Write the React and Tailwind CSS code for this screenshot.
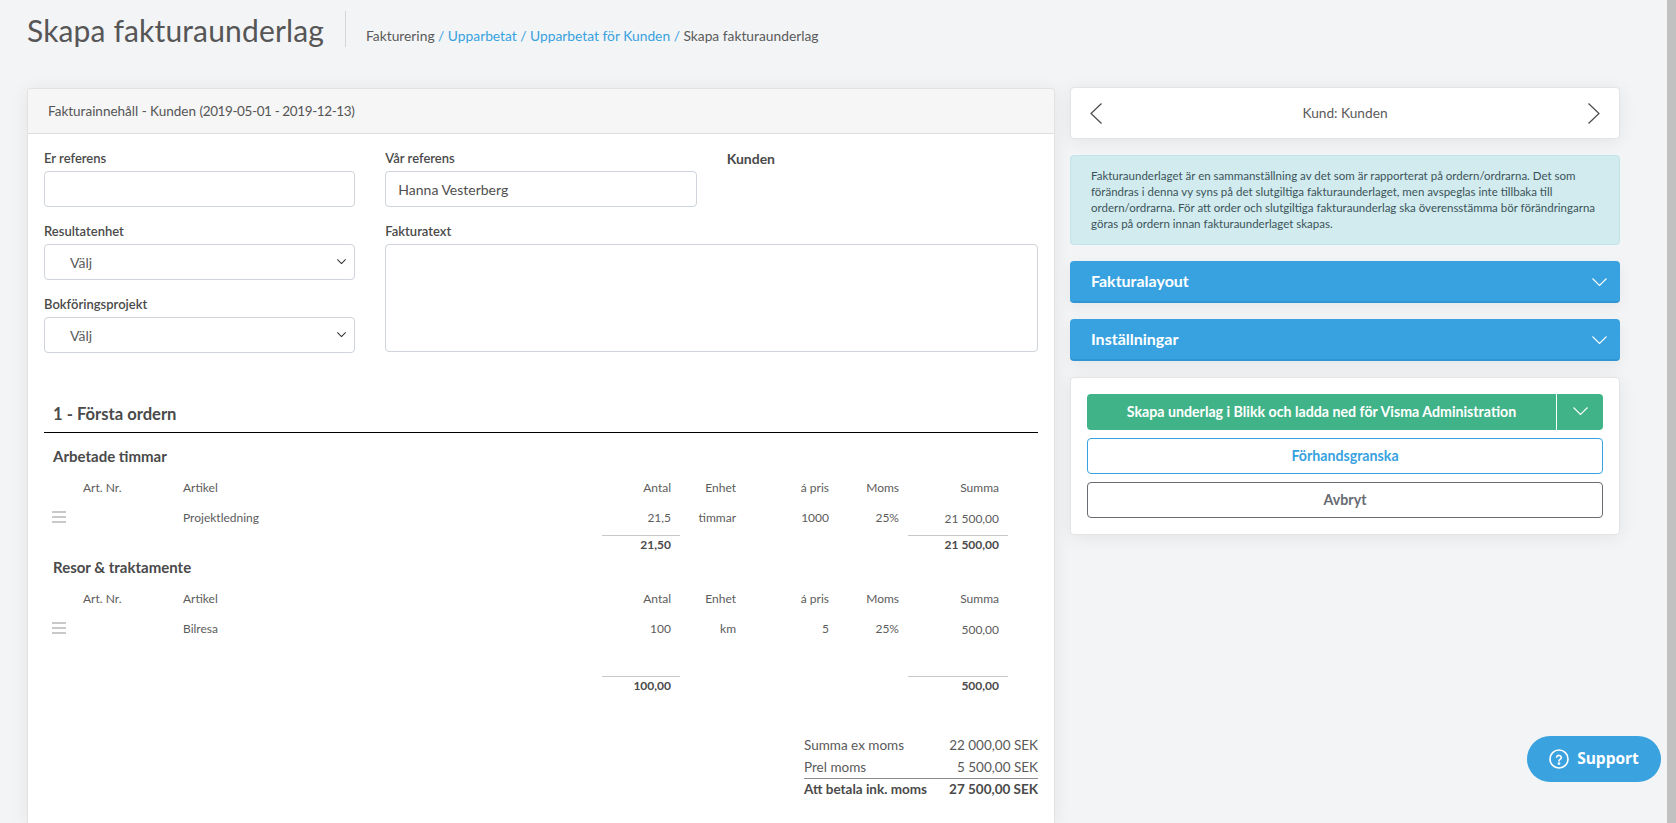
import { useState } from "react";

const cols = "grid grid-cols-[31px_100px_419px_78px_65px_93px_70px_100px] items-center";

function Chevron({ className, strokeWidth = 1.1 }) {
  return (
    <svg viewBox="0 0 15 8" fill="none" stroke="currentColor" strokeWidth={strokeWidth} className={className}>
      <polyline points="0.5,0.5 7.5,7.5 14.5,0.5" />
    </svg>
  );
}

function Burger() {
  return (
    <div className="flex flex-col gap-[3px] w-[14px]">
      <div className="h-[2px] bg-[#c9c9c9]" />
      <div className="h-[2px] bg-[#c9c9c9]" />
      <div className="h-[2px] bg-[#c9c9c9]" />
    </div>
  );
}

function Field({ label, children, className }) {
  return (
    <div className={className}>
      <label className="block h-[27px] pt-[5px] text-[13px] leading-[18px] font-semibold text-[#4a4a4a]">{label}</label>
      {children}
    </div>
  );
}

function Select({ label }) {
  const [value, setValue] = useState("");
  return (
    <Field label={label} className="mb-[10px]">
      <div className="relative">
        <select
          value={value}
          onChange={(e) => setValue(e.target.value)}
          className="appearance-none w-full h-[36px] pl-[25px] bg-white border border-[#ced4da] rounded-[4px] text-[14px] text-[#5a5a5a] outline-none"
        >
          <option value="">Välj</option>
        </select>
        <Chevron strokeWidth={1.8} className="absolute right-[9px] top-[15px] w-[9px] h-[5px] text-[#333]" />
      </div>
    </Field>
  );
}

function ItemTable({ title, art, antal, enhet, pris, summa, totalAntal, totalSumma, tall, top }) {
  return (
    <div>
      <h4 className={`h-[24px] pl-[9px] text-[15px] leading-[24px] font-bold text-[#4a4a4a] ${top}`}>{title}</h4>
      <div className={`${cols} h-[30px] mt-[5px] ml-[8px] text-[12px] text-[#5c5c5c]`}>
        <div />
        <div>Art. Nr.</div>
        <div>Artikel</div>
        <div className="text-right pr-[9px]">Antal</div>
        <div className="text-right pr-[9px]">Enhet</div>
        <div className="text-right pr-[9px]">á pris</div>
        <div className="text-right pr-[9px]">Moms</div>
        <div className="text-right pr-[9px]">Summa</div>
      </div>
      <div className={`${cols} items-start ml-[8px] text-[12px] text-[#5c5c5c] ${tall ? "h-[62px]" : "h-[32px]"}`}>
        <div className="pt-[8px]"><Burger /></div>
        <div />
        <div className="leading-[30px]">{art}</div>
        <div className="leading-[30px] text-right pr-[9px]">{antal}</div>
        <div className="leading-[30px] text-right pr-[9px]">{enhet}</div>
        <div className="leading-[30px] text-right pr-[9px]">{pris}</div>
        <div className="leading-[30px] text-right pr-[9px]">25%</div>
        <div className="leading-[32px] text-right pr-[9px]">{summa}</div>
      </div>
      <div className={`${cols} ml-[8px] text-[12px] font-bold text-[#4a4a4a]`}>
        <div className="col-start-4 h-[19px] leading-[17px] border-t border-[#c8c8c8] text-right pr-[9px]">{totalAntal}</div>
        <div className="col-start-8 h-[19px] leading-[17px] border-t border-[#c8c8c8] text-right pr-[9px]">{totalSumma}</div>
      </div>
    </div>
  );
}

function AccordionBar({ title }) {
  return (
    <div className="h-[42px] flex items-center justify-between pl-[21px] pr-[13px] bg-[#37a2df] border-b-2 border-[#2f95d3] rounded-[4px] text-white shadow-[0_4px_14px_rgba(0,0,0,0.06)]">
      <span className="text-[16px] font-bold">{title}</span>
      <Chevron className="w-[15px] h-[8px] mt-[2px]" />
    </div>
  );
}

export default function App() {
  return (
    <div className="relative h-[823px] overflow-hidden flex bg-[#f3f4f6] font-['Lato',sans-serif] text-[#4a4a4a]">
      <div className="flex-1 min-w-0 pl-[27px]">
        <div className="h-[88px] flex items-start">
          <h1 className="mt-[11px] text-[30px] tracking-[0.15px] leading-[38px] text-[#565656]">Skapa fakturaunderlag</h1>
          <div className="w-px h-[36px] mt-[11px] ml-[21px] bg-[#d5d6d8]" />
          <div className="mt-[26px] ml-[20px] text-[13.8px] leading-[20px] text-[#5a5a5a]">
            Fakturering <span className="text-[#37a2df]">/ Upparbetat / Upparbetat för Kunden /</span> Skapa fakturaunderlag
          </div>
        </div>

        <div className="flex gap-[15px] items-start">
          <div className="w-[1028px] h-[735px] bg-white border border-[#e2e2e2] border-b-0 rounded-t-[4px] shadow-[0_2px_18px_rgba(0,0,0,0.07)]">
            <div className="h-[45px] flex items-center pl-[20px] bg-[#f6f6f6] border-b border-[#dedede] rounded-t-[4px] text-[13.5px] text-[#555]">
              <span>
                Fakturainnehåll - Kunden <span className="tracking-[-0.38px]">(2019-05-01 - 2019-12-13)</span>
              </span>
            </div>

            <div className="grid grid-cols-3 gap-x-[30px] pl-[16px] pr-[16px] pt-[10px]">
              <Field label="Er referens">
                <input readOnly className="w-full h-[36px] bg-white border border-[#ced4da] rounded-[4px] outline-none" />
              </Field>
              <Field label="Vår referens">
                <input
                  readOnly
                  value="Hanna Vesterberg"
                  className="w-full h-[36px] pl-[12px] bg-white border border-[#ced4da] rounded-[4px] text-[14px] text-[#4f4f4f] outline-none"
                />
              </Field>
              <div className="pt-[6px] text-[14px] leading-[18px] font-bold text-[#4a4a4a]">Kunden</div>

              <div className="mt-[10px]">
                <Select label="Resultatenhet" />
                <Select label="Bokföringsprojekt" />
              </div>
              <Field label="Fakturatext" className="col-span-2 mt-[10px]">
                <textarea readOnly className="block w-full h-[108px] bg-white border border-[#ced4da] rounded-[4px] outline-none resize-none" />
              </Field>
            </div>

            <div className="mx-[16px] mt-[31px] h-[39px] pl-[9px] border-b border-black text-[16.6px] leading-[26px] font-bold text-[#4a4a4a]">
              <span className="block pt-[7px]">1 - Första ordern</span>
            </div>

            <div className="ml-[16px]">
              <ItemTable
                title="Arbetade timmar"
                art="Projektledning"
                antal="21,5"
                enhet="timmar"
                pris="1000"
                summa="21 500,00"
                totalAntal="21,50"
                totalSumma="21 500,00"
                top="mt-[11px]"
              />
              <ItemTable
                title="Resor & traktamente"
                art="Bilresa"
                antal="100"
                enhet="km"
                pris="5"
                summa="500,00"
                totalAntal="100,00"
                totalSumma="500,00"
                tall
                top="mt-[1px]"
              />
            </div>

            <div className="ml-auto w-[234px] mr-[16px] mt-[39px] text-[13.5px] text-[#5a5a5a]">
              <div className="h-[22px] flex items-center justify-between">
                <span>Summa ex moms</span>
                <span>22 000,00 SEK</span>
              </div>
              <div className="h-[22px] flex items-center justify-between">
                <span>Prel moms</span>
                <span>5 500,00 SEK</span>
              </div>
              <div className="h-[22px] flex items-center justify-between border-t border-[#8c8c8c] font-bold text-[#4a4a4a]">
                <span>Att betala ink. moms</span>
                <span>27 500,00 SEK</span>
              </div>
            </div>
          </div>

          <div className="w-[550px] flex flex-col gap-[16px] -mt-[1px]">
            <div className="h-[52px] flex items-center justify-between px-[19px] bg-white border border-[#e4e4e4] rounded-[4px] shadow-[0_2px_18px_rgba(0,0,0,0.07)]">
              <svg viewBox="0 0 12 21" fill="none" stroke="#4a4a4a" strokeWidth="1.2" className="w-[12px] h-[21px]">
                <polyline points="11.5,0.5 1,10.5 11.5,20.5" />
              </svg>
              <span className="text-[13.7px] text-[#5a5a5a]">Kund: Kunden</span>
              <svg viewBox="0 0 12 21" fill="none" stroke="#4a4a4a" strokeWidth="1.2" className="w-[12px] h-[21px]">
                <polyline points="0.5,0.5 11,10.5 0.5,20.5" />
              </svg>
            </div>

            <div className="h-[90px] pl-[20px] pr-[17px] pt-[12px] bg-[#d1ebef] border border-[#bfe5eb] rounded-[4px] text-[11.5px] leading-[16px] text-[#3c5459]">
              Fakturaunderlaget är en sammanställning av det som är rapporterat på ordern/ordrarna. Det som förändras i denna vy syns på det slutgiltiga fakturaunderlaget, men avspeglas inte tillbaka till ordern/ordrarna. För att order och slutgiltiga fakturaunderlag ska överensstämma bör förändringarna göras på ordern innan fakturaunderlaget skapas.
            </div>

            <AccordionBar title="Fakturalayout" />
            <AccordionBar title="Inställningar" />

            <div className="h-[158px] flex flex-col gap-[8px] px-[16px] pt-[16px] bg-white border border-[#e4e4e4] rounded-[4px] shadow-[0_2px_18px_rgba(0,0,0,0.07)]">
              <div className="h-[36px] flex bg-[#41b388] rounded-[4px] text-white">
                <button className="flex-1 text-[14.2px] font-bold">Skapa underlag i Blikk och ladda ned för Visma Administration</button>
                <button className="w-[47px] flex items-center justify-center border-l border-white">
                  <Chevron className="w-[15px] h-[8px] -mt-[3px]" />
                </button>
              </div>
              <button className="h-[36px] bg-white border border-[#37a2df] rounded-[4px] text-[14.2px] font-bold text-[#37a2df]">Förhandsgranska</button>
              <button className="h-[36px] bg-white border border-[#676b72] rounded-[4px] text-[14.2px] font-bold text-[#676b72]">Avbryt</button>
            </div>
          </div>
        </div>
      </div>

      <div className="w-[9px] shrink-0 bg-[#c1c1c1]" />

      <button className="absolute left-[1527px] top-[736px] w-[134px] h-[46px] flex items-center justify-center gap-[8px] bg-[#3aa2df] rounded-full text-white text-[15.5px] font-bold font-['Open_Sans',sans-serif]">
        <svg viewBox="0 0 20 20" fill="none" stroke="currentColor" strokeWidth="1.6" className="w-[20px] h-[20px]">
          <circle cx="10" cy="10" r="9" />
          <path d="M7.6 8a2.5 2.5 0 0 1 4.8.6c0 1.6-2.4 1.9-2.4 3.3" strokeLinecap="round" />
          <circle cx="10" cy="14.6" r="0.6" fill="currentColor" />
        </svg>
        Support
      </button>
    </div>
  );
}
